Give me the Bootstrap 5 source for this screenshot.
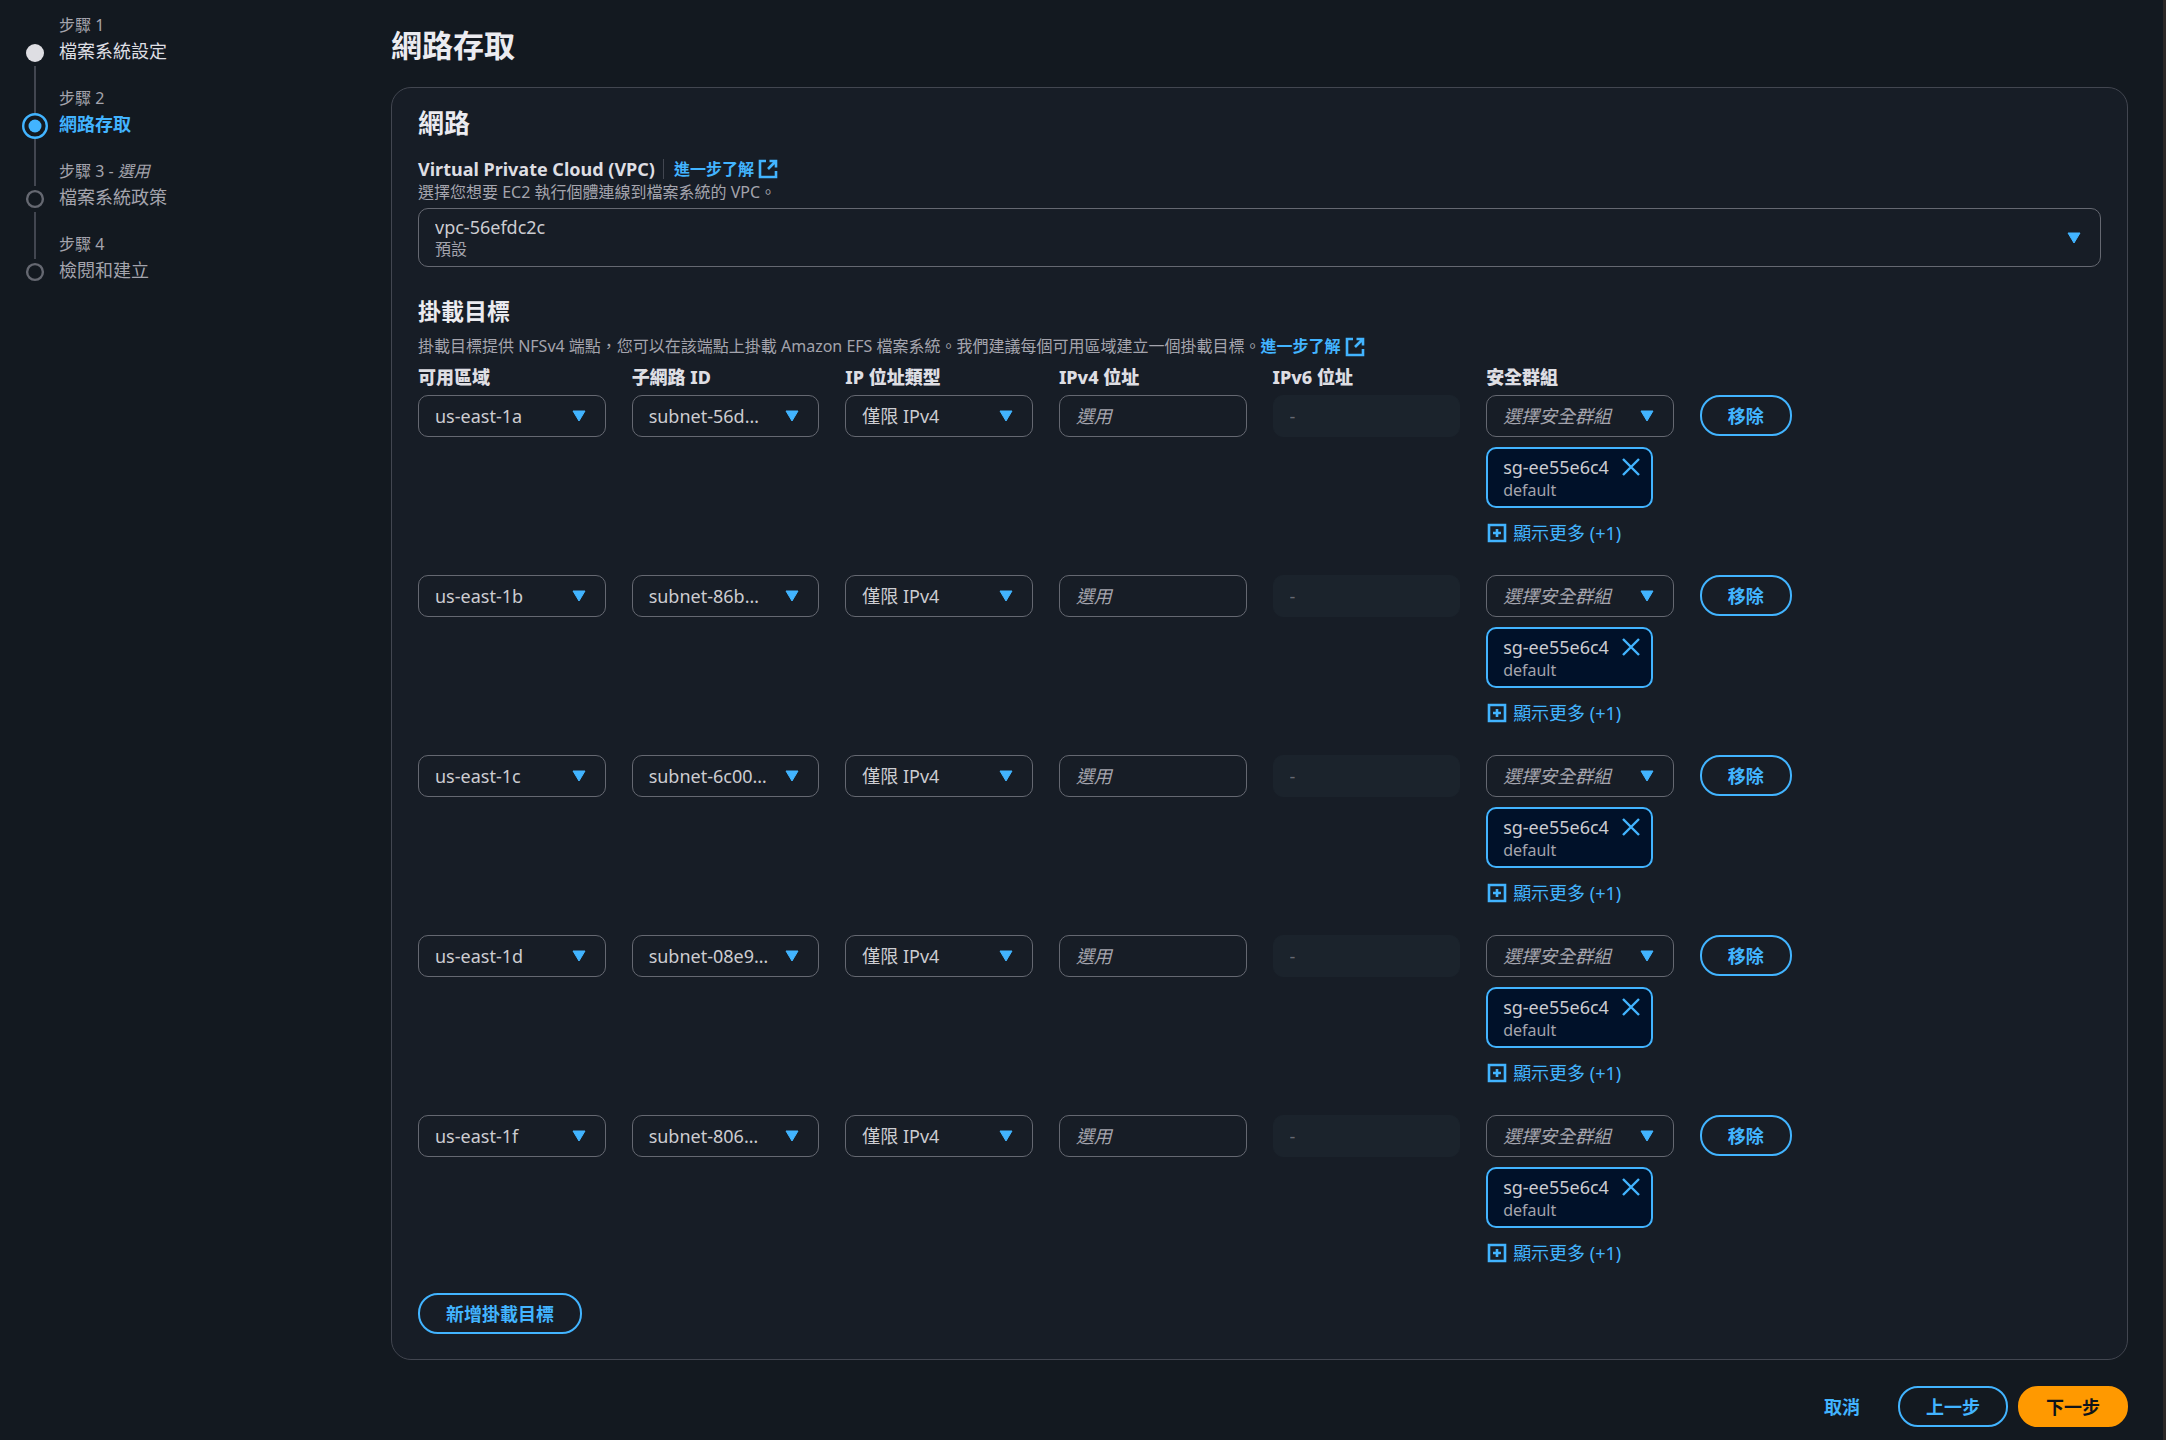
<!DOCTYPE html>
<html lang="zh-TW" data-bs-theme="dark">
<head>
<meta charset="utf-8">
<meta name="viewport" content="width=device-width, initial-scale=1">
<title>網路存取</title>
<link rel="stylesheet" href="https://cdn.jsdelivr.net/npm/bootstrap@5.3.0/dist/css/bootstrap.min.css">
<style>
  :root {
    --accent: #42b4ff;
    --edge: #424650;
    --field-edge: #656871;
    --text: #dedee3;
    --muted: #a4a4ad;
  }
  body {
    font-family: "Noto Sans", "Noto Sans CJK TC", sans-serif;
    font-size: 18px;
    line-height: 26px;
    color: #ccccd1;
    background: #131920;
    border-right: 3px solid #2b2726;
    min-height: 100vh;
  }
  .wizard-nav { flex: 0 0 391px; padding: 15px 20px 0 22px; }
  .step-item { gap: 11px; }
  .step-rail { width: 26px; padding-top: 25px; }
  .step-rail svg { display: block; flex: none; }
  .step-line { width: 2px; flex: 1; background: var(--edge); margin-bottom: -25px; }
  .step-text { padding-bottom: 24px; }
  .fine { font-size: 16px; line-height: 21px; color: var(--muted); }
  .step-name { color: #a4a4ad; margin-top: 2px; }
  .step-done { color: var(--text); }
  .step-now { color: var(--accent); font-weight: 700; }

  .wizard-main { padding: 25px 35px 12px 0; min-width: 0; }
  .page-title { font-size: 31px; line-height: 40px; font-weight: 700; color: #ebebf0; margin: 0 0 22px; }
  .panel { background: #171d26; border: 1px solid var(--edge); border-radius: 20px; padding: 19px 26px 25px; }
  .panel-title { font-size: 26px; line-height: 32px; font-weight: 700; color: #ebebf0; margin: 0 0 17px; }
  .sub-title { font-size: 23px; line-height: 30px; font-weight: 700; color: #ebebf0; margin: 29px 0 10px; }
  .field-label { font-weight: 700; color: var(--text); }
  .column-labels { font-weight: 800; margin: 7px 0 5px; }
  .more-link { color: var(--accent); font-size: 16px; font-weight: 700; text-decoration: none; }
  .split { width: 1px; height: 20px; background: var(--edge); margin: 0 10px 0 8px; }

  .field {
    display: block;
    width: 100%; height: 42px; padding: 0 15px 0 16px;
    font: inherit; color: #ccccd1;
    background-color: transparent; border: 1px solid var(--field-edge); border-radius: 10px;
    appearance: none; outline: 0;
  }
  .field option { background: #171d26; }
  select.field {
    padding-right: 38px; text-overflow: ellipsis;
    background-image: url("data:image/svg+xml,%3Csvg xmlns='http://www.w3.org/2000/svg' viewBox='0 0 14 12'%3E%3Cpath d='M1 1h12L7 11z' fill='%2342b4ff' stroke='%2342b4ff' stroke-linejoin='round'/%3E%3C/svg%3E");
    background-repeat: no-repeat; background-size: 14px 12px; background-position: right 19px center;
  }
  .field::placeholder, .field-empty { font-style: italic; color: var(--muted); opacity: 1; }
  .field:disabled { background: #1b232c; border-color: #1b232c; }
  .field:disabled::placeholder { font-style: normal; color: #656871; }
  .stacked { display: grid; margin-top: 5px; }
  .stacked > * { grid-area: 1 / 1; }
  .stacked .field { height: 59px; padding-bottom: 22px; }
  .stacked .fine { align-self: end; pointer-events: none; padding: 0 17px 7px; }

  .target-grid { display: grid; grid-template-columns: repeat(8, minmax(0, 1fr)); column-gap: 26px; }
  .target-row { padding-bottom: 29px; }
  .target-row:last-child { padding-bottom: 27px; }
  .target-row > div { min-width: 0; }

  .pill {
    font-weight: 700; line-height: 26px; height: 41px; padding: 0 26px; white-space: nowrap;
    color: var(--accent); background: transparent; border: 2px solid var(--accent); border-radius: 20px;
  }
  .pill-plain { border-color: transparent; }
  .pill-main { color: #0f141a; background: #ff9900; border-color: #ff9900; }
  .wizard-actions { gap: 10px; margin-top: 26px; }

  .token {
    width: max-content; height: 61px; margin-top: 10px; padding: 5px 10px 0 15px; gap: 12px;
    background: #001129; border: 2px solid var(--accent); border-radius: 10px;
  }
  .bare { background: none; border: 0; padding: 0; color: var(--accent); }
  .token .bare { height: 26px; }
  .reveal { margin: 12px 0 0 1px; gap: 6px; }
  .bare svg, .more-link svg { display: block; }
</style>
<script src="https://cdn.jsdelivr.net/npm/bootstrap@5.3.0/dist/js/bootstrap.bundle.min.js"></script>
</head>
<body>
<div class="d-flex">
  <nav class="wizard-nav" aria-label="步驟">
    <ol class="list-unstyled m-0">
      <li class="step-item d-flex">
        <div class="step-rail d-flex flex-column align-items-center">
          <svg width="26" height="26" viewBox="0 0 26 26"><circle cx="13" cy="13" r="9" fill="#dedee3"/></svg>
          <span class="step-line"></span>
        </div>
        <div class="step-text"><div class="fine">步驟 1</div><div class="step-name step-done">檔案系統設定</div></div>
      </li>
      <li class="step-item d-flex">
        <div class="step-rail d-flex flex-column align-items-center">
          <svg width="26" height="26" viewBox="0 0 26 26"><circle cx="13" cy="13" r="11.8" fill="none" stroke="#42b4ff" stroke-width="2.4"/><circle cx="13" cy="13" r="6.5" fill="#42b4ff"/></svg>
          <span class="step-line"></span>
        </div>
        <div class="step-text"><div class="fine">步驟 2</div><div class="step-name step-now">網路存取</div></div>
      </li>
      <li class="step-item d-flex">
        <div class="step-rail d-flex flex-column align-items-center">
          <svg width="26" height="26" viewBox="0 0 26 26"><circle cx="13" cy="13" r="7.9" fill="none" stroke="#656871" stroke-width="2.4"/></svg>
          <span class="step-line"></span>
        </div>
        <div class="step-text"><div class="fine">步驟 3 - <i>選用</i></div><div class="step-name">檔案系統政策</div></div>
      </li>
      <li class="step-item d-flex">
        <div class="step-rail d-flex flex-column align-items-center">
          <svg width="26" height="26" viewBox="0 0 26 26"><circle cx="13" cy="13" r="7.9" fill="none" stroke="#656871" stroke-width="2.4"/></svg>
        </div>
        <div class="step-text"><div class="fine">步驟 4</div><div class="step-name">檢閱和建立</div></div>
      </li>
    </ol>
  </nav>

  <main class="wizard-main flex-grow-1">
    <h1 class="page-title">網路存取</h1>
    <section class="panel">
      <h2 class="panel-title">網路</h2>
      <div class="d-flex align-items-center">
        <label class="field-label" for="vpc">Virtual Private Cloud (VPC)</label>
        <span class="split"></span>
        <a class="more-link d-flex align-items-center gap-1" href="#">進一步了解
          <svg width="20" height="20" viewBox="0 0 20 20" fill="none" stroke="#42b4ff" stroke-width="2.6"><path d="M8 2H2v16h16v-6M11.500 2H18v6.500M18 2l-8 8"/></svg></a>
      </div>
      <div class="fine">選擇您想要 EC2 執行個體連線到檔案系統的 VPC。</div>
      <div class="stacked">
        <select class="field" id="vpc"><option>vpc-56efdc2c</option></select>
        <span class="fine">預設</span>
      </div>

      <h3 class="sub-title">掛載目標</h3>
      <div class="fine d-flex align-items-center">
        <span>掛載目標提供 NFSv4 端點，您可以在該端點上掛載 Amazon EFS 檔案系統。我們建議每個可用區域建立一個掛載目標。</span>
        <a class="more-link d-flex align-items-center gap-1" href="#">進一步了解
          <svg width="20" height="20" viewBox="0 0 20 20" fill="none" stroke="#42b4ff" stroke-width="2.6"><path d="M8 2H2v16h16v-6M11.500 2H18v6.500M18 2l-8 8"/></svg></a>
      </div>
      <div class="target-grid field-label column-labels">
        <label for="az-0">可用區域</label>
        <label for="subnet-0">子網路 ID</label>
        <label for="type-0">IP 位址類型</label>
        <label for="v4-0">IPv4 位址</label>
        <label for="v6-0">IPv6 位址</label>
        <label for="sg-0">安全群組</label>
      </div>
      <div id="targets"></div>
      <button type="button" class="pill">新增掛載目標</button>
    </section>
    <div class="wizard-actions d-flex justify-content-end">
      <button type="button" class="pill pill-plain">取消</button>
      <button type="button" class="pill">上一步</button>
      <button type="button" class="pill pill-main">下一步</button>
    </div>
  </main>
</div>
<script>
  const targets = [
    ["us-east-1a", "subnet-56d…"],
    ["us-east-1b", "subnet-86b…"],
    ["us-east-1c", "subnet-6c00…"],
    ["us-east-1d", "subnet-08e9…"],
    ["us-east-1f", "subnet-806…"]
  ];
  document.getElementById("targets").innerHTML = targets.map(([zone, subnet], i) => `
    <div class="target-grid target-row">
      <div><select class="field" id="az-${i}" aria-label="可用區域"><option>${zone}</option></select></div>
      <div><select class="field" id="subnet-${i}" aria-label="子網路 ID"><option>${subnet}</option></select></div>
      <div><select class="field" id="type-${i}" aria-label="IP 位址類型"><option>僅限 IPv4</option></select></div>
      <div><input class="field" id="v4-${i}" aria-label="IPv4 位址" placeholder="選用"></div>
      <div><input class="field" id="v6-${i}" aria-label="IPv6 位址" placeholder="-" disabled></div>
      <div>
        <select class="field field-empty" id="sg-${i}" aria-label="安全群組"><option>選擇安全群組</option></select>
        <div class="token d-flex align-items-start">
          <div><div>sg-ee55e6c4</div><div class="fine">default</div></div>
          <button type="button" class="bare" aria-label="移除 sg-ee55e6c4">
            <svg width="20" height="20" viewBox="0 0 20 20" stroke="#42b4ff" stroke-width="2.4"><path d="M2 2l16 16M18 2L2 18"/></svg></button>
        </div>
        <button type="button" class="bare reveal d-flex align-items-center">
          <svg width="20" height="20" viewBox="0 0 20 20" fill="none" stroke="#42b4ff" stroke-width="2.6"><path d="M2 2h16v16H2zM10 6v8M6 10h8"/></svg>顯示更多 (+1)</button>
      </div>
      <div><button type="button" class="pill">移除</button></div>
    </div>`).join("");
</script>
</body>
</html>
